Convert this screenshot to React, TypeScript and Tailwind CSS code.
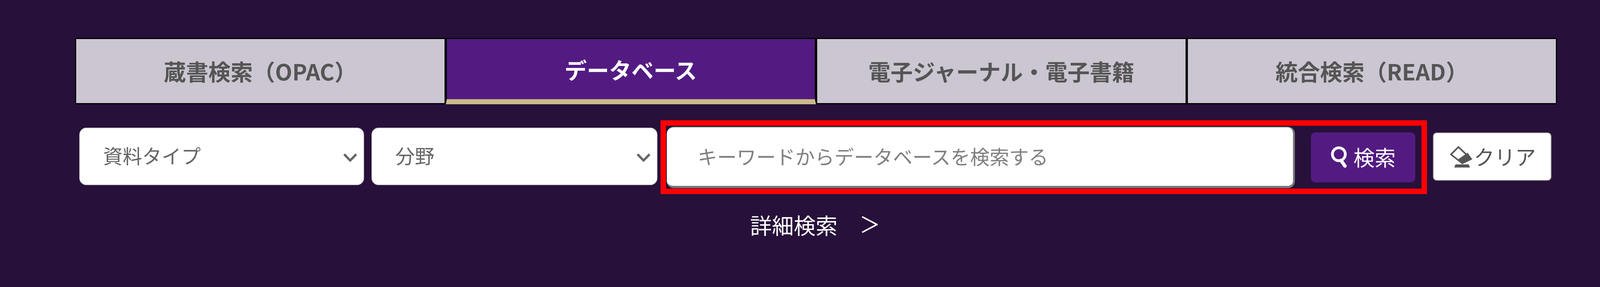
const FONT = "font-['Noto_Sans_CJK_JP','Noto_Sans',sans-serif]";

const tabs = [
  { label: "蔵書検索（OPAC）", active: false },
  { label: "データベース", active: true },
  { label: "電子ジャーナル・電子書籍", active: false },
  { label: "統合検索（READ）", active: false },
];

const Chevron = () => (
  <svg width="35" height="21" viewBox="0 0 35 21" fill="none" stroke="#666666" strokeWidth="6">
    <path d="M2 2 L17.5 18 L33 2" />
  </svg>
);

const SearchIcon = () => (
  <svg width="43" height="55" viewBox="0 0 43 55" fill="none" stroke="#ffffff">
    <circle cx="21.5" cy="20" r="16.5" strokeWidth="7" />
    <path d="M27 36 L37 50" strokeWidth="9" strokeLinecap="round" />
  </svg>
);

const EraserIcon = () => (
  <svg width="57" height="55" viewBox="0 0 57 55">
    <path d="M21.5 2.5 L2.5 21.5 L31 44 L54 33 Z" fill="none" stroke="#555555" strokeWidth="4" strokeLinejoin="round" />
    <path d="M45 17 L57 34 L32 46 L21 34 Z" fill="#555555" />
    <path d="M14 47 H48 L51 55 H11 Z" fill="#555555" />
  </svg>
);

const SelectBox = ({ label, width }: { label: string; width: string }) => (
  <div
    className={`${width} h-[147px] mb-[4px] shrink-0 flex items-center justify-between pl-[59px] pr-[16px] pb-[6px] bg-white rounded-[18px] border-[2px] border-[#d8d8d8] text-[50px] text-[#666666]`}
  >
    <span>{label}</span>
    <span className="pt-[12px]">
      <Chevron />
    </span>
  </div>
);

export default function App() {
  return (
    <div className={`w-[4188px] h-[735px] bg-[#27103a] pt-[97px] overflow-hidden ${FONT}`}>
      <div className="flex w-[3794px] ml-[192px] h-[170px]">
        {tabs.map((tab) => (
          <div
            key={tab.label}
            className={
              tab.active
                ? "flex-1 flex items-center justify-center border-[3px] border-black border-b-[13px] border-b-[#c9bb8a] bg-[#531b82] text-white text-[57px] font-bold pt-[2px]"
                : "flex-1 flex items-center justify-center border-[3px] border-black bg-[#cbc6d1] text-[#555555] text-[57px] font-bold"
            }
          >
            {tab.label}
          </div>
        ))}
      </div>

      <div className="flex items-center ml-[203px] mt-[41px] h-[189px]">
        <SelectBox label="資料タイプ" width="w-[729px]" />
        <div className="ml-[19px]">
          <SelectBox label="分野" width="w-[732px]" />
        </div>

        <div className="ml-[8px] w-[1962px] h-[189px] shrink-0 flex items-center border-[14px] border-[#ff0000] pl-[2px] pr-[16px]">
          <input
            type="text"
            placeholder="キーワードからデータベースを検索する"
            className="w-[1608px] h-[158px] pl-[79px] pb-[4px] bg-white rounded-[18px] border-t-[2px] border-t-[#555555] border-r-[5px] border-r-[#777777] border-b-[6px] border-b-[#777777] text-[50px] text-[#666666] placeholder:text-[#808080] outline-none"
          />
          <button className="ml-[41px] w-[267px] h-[128px] flex items-center justify-center gap-[16px] bg-[#531b82] rounded-[12px] text-white text-[54px]">
            <SearchIcon />
            <span className="-mt-[2px]">検索</span>
          </button>
        </div>

        <button className="ml-[15px] mb-[3px] w-[304px] h-[124px] flex items-center justify-start pl-[42px] gap-[4px] bg-white rounded-[10px] border-[2px] border-[#888888] text-[#555555] text-[53px]">
          <EraserIcon />
          <span>クリア</span>
        </button>
      </div>

      <div className="flex items-center ml-[1920px] mt-[36px] text-white text-[56px]">
        <span>詳細検索</span>
        <svg className="ml-[62px]" width="41" height="42" viewBox="0 0 41 42" fill="none" stroke="#ffffff" strokeWidth="4">
          <path d="M1 1 L39 21 L1 41" />
        </svg>
      </div>
    </div>
  );
}
